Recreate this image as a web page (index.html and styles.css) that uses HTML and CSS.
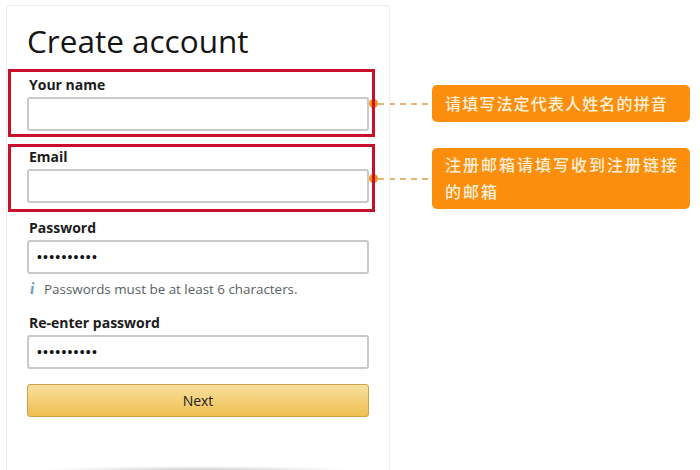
FILE: index.html
```html
<!DOCTYPE html>
<html lang="en">
<head>
    <meta charset="UTF-8">
    <meta name="viewport" content="width=device-width, initial-scale=1.0">
    <link rel="stylesheet" href="styles.css">
    <title>Create account</title>
</head>
<body>
    <div class="page">
        <form class="card">
            <h1>Create account</h1>
            <div class="field marked">
                <label for="name">Your name</label>
                <input id="name" type="text">
            </div>
            <div class="field marked second">
                <label for="email">Email</label>
                <input id="email" type="text">
            </div>
            <div class="field password">
                <label for="pass">Password</label>
                <input id="pass" type="password" value="1234567890">
            </div>
            <p class="hint"><i>i</i>Passwords must be at least 6 characters.</p>
            <div class="field reenter">
                <label for="pass2">Re-enter password</label>
                <input id="pass2" type="password" value="1234567890">
            </div>
            <button class="next" type="button">Next</button>
            <div class="card-shadow"></div>
        </form>
        <div class="notes">
            <div class="note first">
                <span class="dot"></span>
                <span class="dash"></span>
                <p class="bubble">请填写法定代表人姓名的拼音</p>
            </div>
            <div class="note">
                <span class="dot"></span>
                <span class="dash"></span>
                <p class="bubble wide">注册邮箱请填写收到注册链接的邮箱</p>
            </div>
        </div>
    </div>
</body>
</html>
```

FILE: styles.css
```css
* {
    margin: 0;
    padding: 0;
    box-sizing: border-box;
}
html, body {
    height: 470px;
    overflow: hidden;
    background-color: #fff;
}
body {
    font-family: "Open Sans", "Noto Sans", sans-serif;
    color: #111;
}
.page {
    display: flex;
    height: 470px;
    padding: 5px 10px 0 6px;
}
.card {
    position: relative;
    width: 384px;
    flex-shrink: 0;
    padding: 0 20px;
    border: 1px solid #ececec;
    border-bottom: none;
    border-radius: 4px 4px 0 0;
}
h1 {
    height: 63px;
    padding-top: 14px;
    font-size: 31.5px;
    line-height: 42px;
    font-weight: 400;
    color: #151515;
}
.field label {
    display: block;
    height: 22px;
    padding-left: 2px;
    font-size: 14px;
    line-height: 20px;
    font-weight: 700;
    color: #1c1c1c;
}
.field input {
    display: block;
    width: 100%;
    height: 34px;
    padding: 0 8px;
    border: 2px solid #c9c9c9;
    border-radius: 3px;
    background-color: #fff;
    font-size: 14px;
    letter-spacing: 1.2px;
    color: #111;
    outline: none;
}
.marked {
    margin: 0 -6px 0 -19px;
    height: 68px;
    padding: 3px 3px 0 16px;
    border: 3px solid #c8102a;
}
.second {
    margin-top: 7px;
    padding-top: 0;
}
.password {
    margin-top: 6px;
}
.hint {
    display: flex;
    align-items: center;
    height: 30px;
    padding-left: 3px;
    font-size: 13.4px;
    color: #5a5f63;
}
.hint i {
    width: 14px;
    font-family: "Liberation Serif", serif;
    font-size: 16px;
    font-weight: 700;
    color: #6d9fc0;
}
.reenter {
    margin-top: 9px;
}
.next {
    display: block;
    width: 100%;
    height: 33px;
    margin-top: 15px;
    border: 1px solid #c9a24a;
    border-radius: 3px;
    background: linear-gradient(#f8df9f, #efc04f);
    font-family: inherit;
    font-size: 14px;
    color: #222;
}
.card-shadow {
    position: absolute;
    left: 38px;
    right: 38px;
    bottom: 0;
    height: 4px;
    background: radial-gradient(ellipse at 50% 100%, #ccc, #fff 70%);
}
.notes {
    flex: 1;
    margin-left: -21px;
    padding-top: 80px;
}
.note {
    display: flex;
    align-items: center;
    margin-top: 26px;
}
.note.first {
    margin-top: 0;
}
.dot {
    width: 9px;
    height: 9px;
    border-radius: 50%;
    background-color: #f5901e;
    flex-shrink: 0;
}
.dash {
    flex: 1;
    height: 2px;
    background: repeating-linear-gradient(90deg, #e3b67a 0 6px, transparent 6px 11px);
}
.bubble {
    width: 258px;
    padding: 5px 13px;
    border-radius: 5px;
    background-color: #fb8f0d;
    font-family: "Noto Sans CJK SC", sans-serif;
    font-size: 16px;
    font-weight: 500;
    line-height: 27px;
    letter-spacing: 1.15px;
    color: #fdf0dc;
}
.wide {
    letter-spacing: 2px;
    padding: 3px 10px 4px 13px;
}
```
